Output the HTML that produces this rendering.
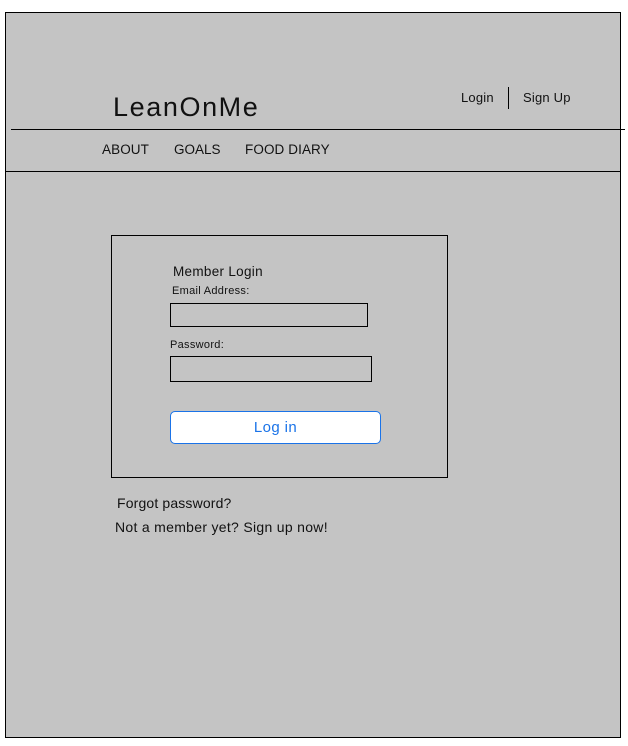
<!DOCTYPE html>
<html><head><style>
body{margin:0;width:628px;height:746px;background:#fff;position:relative;font-family:"Liberation Sans",sans-serif;color:#111;overflow:hidden}
.a{position:absolute}
.t{position:absolute;white-space:nowrap}
</style></head><body>
<div class="a" style="left:5px;top:12px;width:614px;height:724px;border:1px solid #000;background:#c4c4c4"></div>
<div class="a" style="left:11px;top:129px;width:614px;height:1px;background:#000"></div>
<div class="a" style="left:6px;top:171px;width:614px;height:1px;background:#000"></div>
<div class="t" style="left:113px;top:92px;font-size:27px;letter-spacing:1.6px">LeanOnMe</div>
<div class="t" style="left:461px;top:90px;font-size:13px;letter-spacing:0.2px">Login</div>
<div class="a" style="left:508px;top:87px;width:1px;height:22px;background:#000"></div>
<div class="t" style="left:523px;top:90px;font-size:13px;letter-spacing:0.2px">Sign Up</div>
<div class="t" style="left:102px;top:142px;font-size:13.5px;letter-spacing:0.1px">ABOUT</div>
<div class="t" style="left:174px;top:142px;font-size:13.5px">GOALS</div>
<div class="t" style="left:245px;top:142px;font-size:13.5px;letter-spacing:0.1px">FOOD DIARY</div>
<div class="a" style="left:111px;top:235px;width:335px;height:241px;border:1px solid #000"></div>
<div class="t" style="left:173px;top:264px;font-size:13.5px;letter-spacing:0.3px">Member Login</div>
<div class="t" style="left:172px;top:285px;font-size:11px;letter-spacing:0.3px">Email Address:</div>
<div class="a" style="left:170px;top:303px;width:196px;height:22px;border:1px solid #000"></div>
<div class="t" style="left:170px;top:339px;font-size:11px;letter-spacing:0.3px">Password:</div>
<div class="a" style="left:170px;top:356px;width:200px;height:24px;border:1px solid #000"></div>
<div class="a" style="left:170px;top:411px;width:209px;height:31px;border:1px solid #1a73e8;border-radius:5px;background:#fff;color:#1a73e8;font-size:15px;text-align:center;line-height:31px;letter-spacing:0.4px">Log in</div>
<div class="t" style="left:117px;top:495px;font-size:14px;letter-spacing:0.15px">Forgot password?</div>
<div class="t" style="left:115px;top:519px;font-size:14px;letter-spacing:0.3px">Not a member yet? Sign up now!</div>
</body></html>
